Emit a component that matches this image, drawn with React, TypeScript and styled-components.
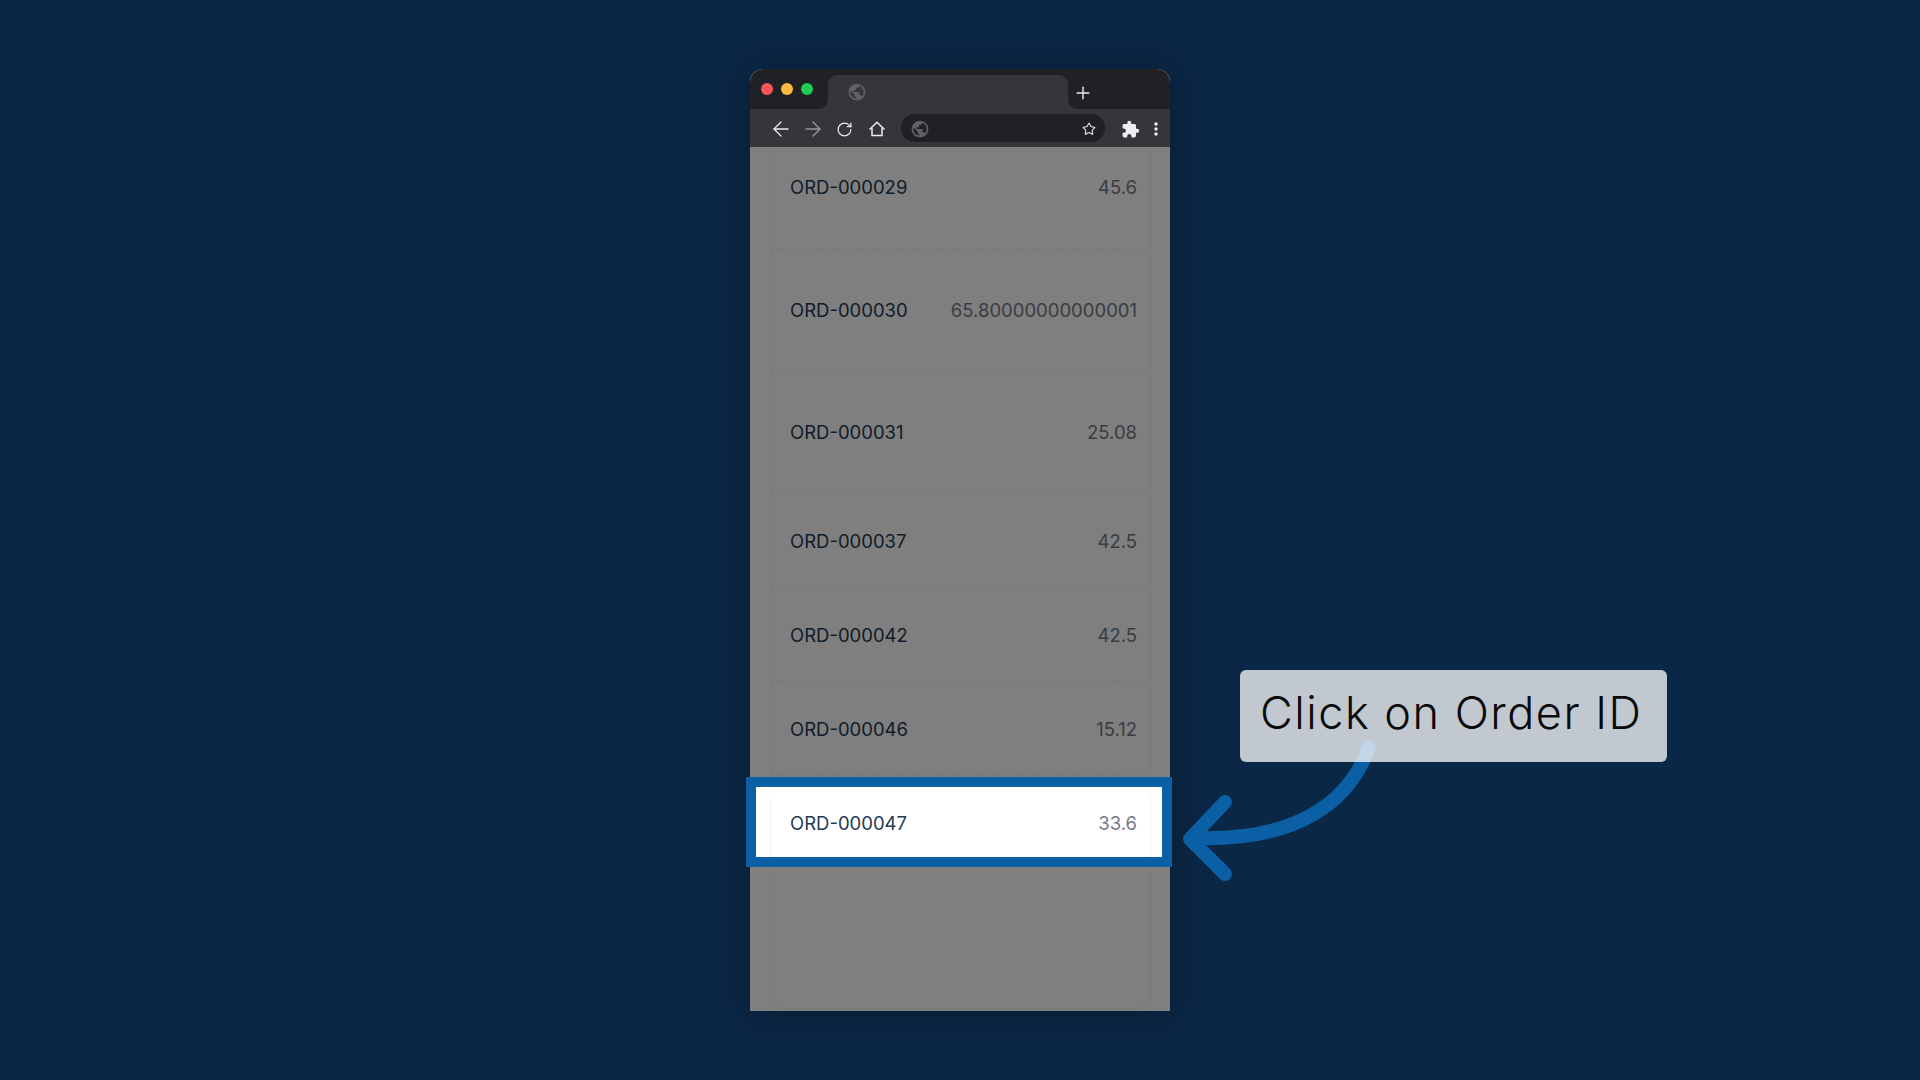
import React from 'react';
import styled, { createGlobalStyle } from 'styled-components';
import { ArrowLeft, ArrowRight, RotateCw, Star, Plus } from 'lucide-react';
import { MdPublic, MdExtension, MdMoreVert } from 'react-icons/md';

const GlobalStyle = createGlobalStyle`
  html, body {
    margin: 0;
    padding: 0;
    background: #0b2746;
    font-family: 'Inter', 'Liberation Sans', sans-serif;
  }
  * { box-sizing: border-box; }
`;

const Page = styled.div`
  position: relative;
  width: 1920px;
  height: 1080px;
  padding-top: 69px;
  display: flex;
  justify-content: center;
  align-items: flex-start;
  overflow: hidden;
  background: #0b2746;
`;

const BrowserWindow = styled.div`
  width: 420px;
  height: 942px;
  display: flex;
  flex-direction: column;
  border-radius: 13px 13px 0 0;
  background: #fff;
  box-shadow: 0 0 40px rgba(0, 0, 0, 0.32);
`;

const TitleBar = styled.div`
  height: 40px;
  flex: none;
  padding: 6px 0 0 11px;
  display: flex;
  background: #202124;
  border-radius: 13px 13px 0 0;
`;

const Lights = styled.div`
  width: 67px;
  height: 28px;
  flex: none;
  display: flex;
  align-items: center;
  gap: 8px;
`;

const Light = styled.span<{ $color: string }>`
  width: 12px;
  height: 12px;
  border-radius: 50%;
  background: ${p => p.$color};
`;

const Tab = styled.div`
  position: relative;
  width: 240px;
  flex: none;
  padding: 7px 0 0 19px;
  background: #35363a;
  border-radius: 9px 9px 0 0;
  color: #5f6165;
  font-size: 20px;
  line-height: 0;

  &::before,
  &::after {
    content: '';
    position: absolute;
    bottom: 0;
    width: 9px;
    height: 9px;
  }
  &::before {
    left: -9px;
    background: radial-gradient(circle at 0 0, transparent 8.5px, #35363a 9px);
  }
  &::after {
    right: -9px;
    background: radial-gradient(circle at 100% 0, transparent 8.5px, #35363a 9px);
  }
`;

const NewTab = styled.div`
  margin: 8px 0 0 5px;
  width: 20px;
  height: 20px;
  color: #e8eaed;
  line-height: 0;
`;

const ToolBar = styled.div`
  height: 38px;
  flex: none;
  padding: 2px 0 0 15px;
  display: flex;
  align-items: center;
  background: #35363a;
`;

const ToolButton = styled.div<{ $width?: number; $dim?: boolean }>`
  width: ${p => p.$width ?? 32}px;
  height: 28px;
  flex: none;
  display: flex;
  align-items: center;
  justify-content: center;
  color: ${p => (p.$dim ? '#9a9b9e' : '#eceef0')};
`;

const ReloadIcon = styled(RotateCw)`
  margin-left: -2px;
`;

const Address = styled.div`
  width: 204px;
  height: 28px;
  margin: -2px 9px 0 8px;
  padding: 2px 9px 0 9px;
  flex: none;
  display: flex;
  align-items: center;
  justify-content: space-between;
  border-radius: 14px;
  background: #202124;
  color: #5f6165;
  font-size: 20px;
`;

const StarMark = styled.span`
  color: #e8eaed;
  line-height: 0;
`;

const Content = styled.div`
  position: relative;
  flex: 1;
  min-height: 0;
  padding: 0 19px 2px 20px;
  display: flex;
  background: #fff;
`;

const Card = styled.div`
  flex: 1;
  display: flex;
  flex-direction: column;
  border: 1px solid #f1f2f4;
  border-top: none;
  border-radius: 0 0 14px 14px;
`;

const Row = styled.div<{ $height: number; $lift?: number; $active?: boolean }>`
  position: relative;
  height: ${p => p.$height}px;
  flex: none;
  padding: 0 13px ${p => p.$lift ?? 0}px 19px;
  display: flex;
  align-items: center;
  justify-content: space-between;
  border-bottom: ${p => (p.$active ? 'none' : '1px dashed #eceef0')};
  z-index: ${p => (p.$active ? 3 : 'auto')};
`;

const OrderId = styled.span`
  font-size: 18.5px;
  line-height: 24px;
  color: #243a56;
`;

const Amount = styled.span`
  font-size: 18.5px;
  line-height: 24px;
  color: #737a86;
`;

const DimSheet = styled.div`
  position: absolute;
  inset: 0;
  background: rgba(0, 0, 0, 0.5);
  z-index: 2;
`;

/* blue frame around the row the user should click */
const SpotFrame = styled.div`
  position: absolute;
  inset: 1px -22px 3px -25px;
  border: 10px solid #0b5fa5;
  background: #fff;
  z-index: -1;

  &::after {
    content: '';
    position: absolute;
    top: 9px;
    bottom: 0;
    left: 14px;
    right: 11px;
    border-left: 1px solid #f1f2f4;
    border-right: 1px solid #f1f2f4;
  }
`;

const ArrowSvg = styled.svg`
  position: absolute;
  left: 0;
  top: 0;
  pointer-events: none;
`;

const Callout = styled.div`
  position: absolute;
  left: 1240px;
  top: 670px;
  width: 427px;
  height: 92px;
  padding: 16px 0 0 20px;
  border-radius: 6px;
  background: rgba(255, 255, 255, 0.75);
  color: #0a0a0a;
  font-family: 'Inter', 'Liberation Sans', sans-serif;
  font-weight: 300;
  font-size: 45px;
  letter-spacing: 1.5px;
  line-height: 54px;
  white-space: nowrap;
`;

const HomeIcon = () => (
  <svg width="18" height="18" viewBox="0 0 18 18" fill="none" stroke="currentColor" strokeWidth="1.5" strokeLinejoin="miter">
    <path d="M1.5 9.5L9 2.2L16.5 9.5" />
    <path d="M4 8V15.5H14V8" />
  </svg>
);

const rows = [
  { id: 'ORD-000029', amount: '45.6', height: 102, lift: 21 },
  { id: 'ORD-000030', amount: '65.80000000000001', height: 122 },
  { id: 'ORD-000031', amount: '25.08', height: 123 },
  { id: 'ORD-000037', amount: '42.5', height: 94 },
  { id: 'ORD-000042', amount: '42.5', height: 94 },
  { id: 'ORD-000046', amount: '15.12', height: 94 },
];

const App = () => {
  return (
    <Page>
      <GlobalStyle />
      <BrowserWindow>
        <TitleBar>
          <Lights>
            <Light $color="#fd5557" />
            <Light $color="#fdb83f" />
            <Light $color="#1fcc56" />
          </Lights>
          <Tab>
            <MdPublic />
          </Tab>
          <NewTab>
            <Plus size={20} strokeWidth={1.7} />
          </NewTab>
        </TitleBar>
        <ToolBar>
          <ToolButton>
            <ArrowLeft size={24} strokeWidth={1.3} />
          </ToolButton>
          <ToolButton $dim>
            <ArrowRight size={24} strokeWidth={1.3} />
          </ToolButton>
          <ToolButton>
            <ReloadIcon size={17} strokeWidth={1.7} />
          </ToolButton>
          <ToolButton>
            <HomeIcon />
          </ToolButton>
          <Address>
            <MdPublic />
            <StarMark>
              <Star size={14} strokeWidth={1.8} />
            </StarMark>
          </Address>
          <ToolButton>
            <MdExtension size={19} />
          </ToolButton>
          <ToolButton $width={20}>
            <MdMoreVert size={20} />
          </ToolButton>
        </ToolBar>
        <Content>
          <Card>
            {rows.map(row => (
              <Row key={row.id} $height={row.height} $lift={row.lift}>
                <OrderId>{row.id}</OrderId>
                <Amount>{row.amount}</Amount>
              </Row>
            ))}
            <Row $height={94} $active>
              <SpotFrame />
              <OrderId>ORD-000047</OrderId>
              <Amount>33.6</Amount>
            </Row>
          </Card>
          <DimSheet />
        </Content>
      </BrowserWindow>
      <ArrowSvg width="1920" height="1080" viewBox="0 0 1920 1080" fill="none">
        <path
          d="M1369 747C1350 800 1300 842 1192 838"
          stroke="#0b5fa5"
          strokeWidth="14"
          strokeLinecap="round"
        />
        <path
          d="M1225 802L1190 839L1225 874"
          stroke="#0b5fa5"
          strokeWidth="14"
          strokeLinecap="round"
          strokeLinejoin="round"
        />
      </ArrowSvg>
      <Callout>Click on Order ID</Callout>
    </Page>
  );
};

export default App;
